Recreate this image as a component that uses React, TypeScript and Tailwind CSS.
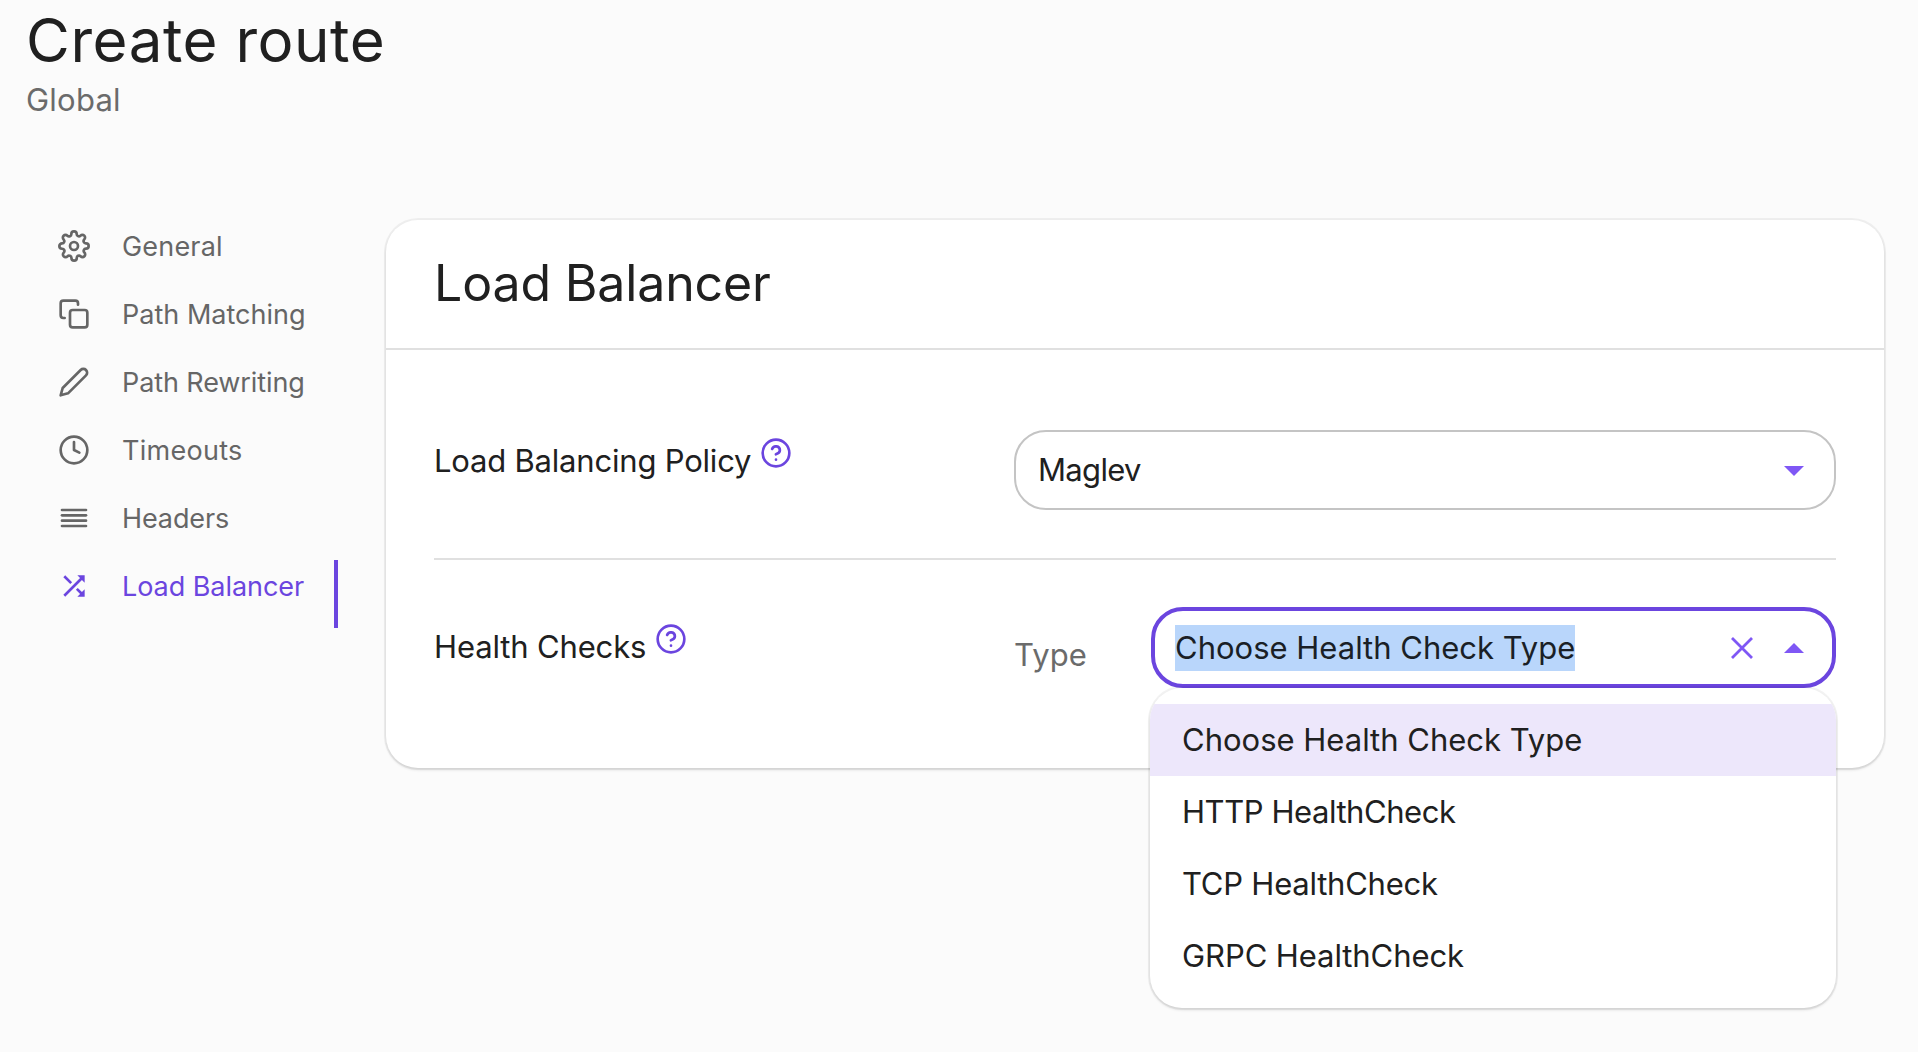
import React from "react";
import type { IconType } from "react-icons";
import {
  FiAlignJustify,
  FiClock,
  FiCopy,
  FiEdit2,
  FiHelpCircle,
  FiSettings,
} from "react-icons/fi";
import { MdShuffle } from "react-icons/md";

type NavItem = { label: string; icon: IconType; tracking: string; active?: boolean };

const navItems: NavItem[] = [
  { label: "General", icon: FiSettings, tracking: "tracking-[0.18px]" },
  { label: "Path Matching", icon: FiCopy, tracking: "tracking-[0.02px]" },
  { label: "Path Rewriting", icon: FiEdit2, tracking: "tracking-[-0.1px]" },
  { label: "Timeouts", icon: FiClock, tracking: "tracking-[0.28px]" },
  { label: "Headers", icon: FiAlignJustify, tracking: "tracking-[-0.1px]" },
  { label: "Load Balancer", icon: MdShuffle, tracking: "tracking-[-0.05px]", active: true },
];

const options = [
  { label: "Choose Health Check Type", tracking: "tracking-[0px]", selected: true },
  { label: "HTTP HealthCheck", tracking: "tracking-[-0.44px]", selected: false },
  { label: "TCP HealthCheck", tracking: "tracking-[-0.23px]", selected: false },
  { label: "GRPC HealthCheck", tracking: "tracking-[-0.08px]", selected: false },
];

function Caret({ up = false }: { up?: boolean }) {
  return (
    <svg width="20" height="10" viewBox="0 0 20 10" fill="#7f57f5" className="shrink-0">
      <path d={up ? "M0 10L10 0L20 10Z" : "M0 0L10 10L20 0Z"} />
    </svg>
  );
}

function FieldLabel({ text, className }: { text: string; className: string }) {
  return (
    <div className="flex h-10 w-[580px] shrink-0 items-start">
      <span className={`whitespace-nowrap text-[31px] leading-10 ${className}`}>{text}</span>
      <FiHelpCircle size={32} className="-mt-1 ml-[9px] shrink-0 text-[#6b45df]" />
    </div>
  );
}

function Sidebar() {
  return (
    <nav className="mt-[100px] w-[338px] shrink-0">
      {navItems.map(({ label, icon: Icon, tracking, active }) => (
        <a
          key={label}
          className={`flex h-[68px] items-center border-r-4 pb-4 pl-[58px] ${
            active ? "border-[#6b45df] text-[#6b45df]" : "border-transparent text-[#666666]"
          }`}
        >
          <Icon size={32} className="shrink-0" />
          <span className={`ml-8 whitespace-nowrap pt-[2px] text-[27px] leading-10 ${tracking}`}>
            {label}
          </span>
        </a>
      ))}
    </nav>
  );
}

function HealthCheckSelect() {
  return (
    <div className="relative ml-auto w-[685px]">
      <div className="flex h-[81px] items-center rounded-[32px] border-4 border-[#6b45df] bg-white pr-7 pl-5">
        <span className="h-[46px] w-[400px] whitespace-nowrap bg-[#b9d6fb] text-[31px] leading-[46px] tracking-[0px] text-[#1a1f26]">
          Choose Health Check Type
        </span>
        <svg
          width="22"
          height="22"
          viewBox="0 0 22 22"
          stroke="#7f57f5"
          strokeWidth="2.8"
          className="mr-[31px] ml-auto shrink-0"
        >
          <path d="M1 1L21 21M21 1L1 21" />
        </svg>
        <Caret up />
      </div>
      <ul className="absolute top-[81px] -left-px w-[686px] overflow-hidden rounded-[32px] bg-white py-4 shadow-[0_0_0_2px_rgba(0,0,0,0.05),0_2px_3px_rgba(0,0,0,0.12)]">
        {options.map(({ label, tracking, selected }) => (
          <li
            key={label}
            className={`flex h-[72px] items-center pl-8 text-[31px] leading-10 ${tracking} ${
              selected ? "bg-[#ede7fb]" : ""
            }`}
          >
            {label}
          </li>
        ))}
      </ul>
    </div>
  );
}

export default function App() {
  return (
    <div className="h-[1052px] w-[1918px] overflow-hidden bg-[#fbfbfb] font-['Inter',sans-serif] text-[#202020]">
      <header className="pt-[10px] pl-[26px]">
        <h1 className="text-[60px] leading-[60px] tracking-[0.55px]">Create route</h1>
        <p className="mt-[10px] text-[31px] leading-10 tracking-[0.22px] text-[#6b6b6b]">Global</p>
      </header>

      <div className="flex items-start">
        <Sidebar />
        <main className="mt-[100px] ml-12 h-[548px] w-[1498px] rounded-[32px] bg-white shadow-[0_0_0_2px_rgba(0,0,0,0.05),0_2px_3px_rgba(0,0,0,0.12)]">
          <div className="flex h-[130px] items-center border-b-2 border-[#e0e0e0] pb-[2px] pl-12">
            <h2 className="text-[50px] leading-[60px] tracking-[-0.14px]">Load Balancer</h2>
          </div>

          <div className="px-12">
            <section className="flex items-start border-b-2 border-[#e0e0e0] pt-20 pb-12">
              <div className="mt-[11px]">
                <FieldLabel text="Load Balancing Policy" className="tracking-[-0.2px]" />
              </div>
              <div className="flex h-20 flex-1 items-center justify-between rounded-[32px] border-2 border-[#c4c4c4] pr-[30px] pl-[22px]">
                <span className="text-[31px] leading-10 tracking-[-0.68px]">Maglev</span>
                <div className="pt-[2px]">
                  <Caret />
                </div>
              </div>
            </section>

            <section className="flex items-start pt-[47px]">
              <div className="mt-5">
                <FieldLabel text="Health Checks" className="tracking-[-0.14px]" />
              </div>
              <span className="mt-7 text-[31px] leading-10 tracking-[0.1px] text-[#6b6b6b]">
                Type
              </span>
              <HealthCheckSelect />
            </section>
          </div>
        </main>
      </div>
    </div>
  );
}
